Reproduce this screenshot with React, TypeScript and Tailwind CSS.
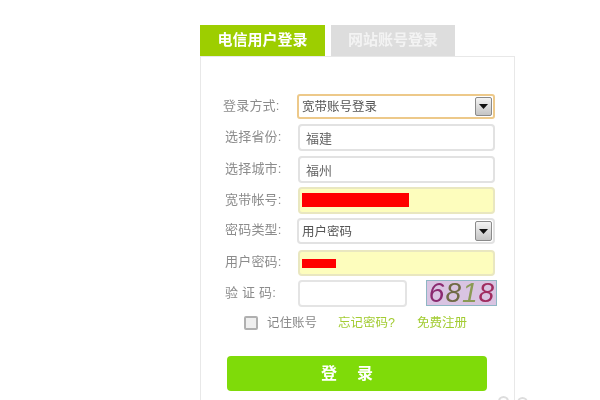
import React from "react";

const font = { fontFamily: '"Liberation Sans", "Noto Sans CJK SC", sans-serif' };

function Arrow() {
  return (
    <div className="absolute right-[1px] top-[1px] bottom-[1px] w-[17px] flex items-center justify-center rounded-[2px] border border-[#8a8a8a] bg-gradient-to-b from-[#f4f4f4] to-[#c4c4c4]">
      <svg width="9" height="5" viewBox="0 0 9 5"><path d="M0 0h9L4.5 5z" fill="#111" /></svg>
    </div>
  );
}

function Row({ label, className, children, indent }: { label: string; className: string; children: React.ReactNode; indent?: boolean }) {
  return (
    <div className={`flex items-center ${className}`}>
      <div className={`w-[74px] shrink-0 -mt-[3px] text-[13px] leading-none text-[#8c8c8c] tracking-[0.2px] whitespace-pre ${indent ? "pl-[2px]" : ""}`}>{label}</div>
      {children}
    </div>
  );
}

function Field({ children, yellow }: { children?: React.ReactNode; yellow?: boolean }) {
  return (
    <div className={`w-[197px] h-full ml-[1px] rounded-[4px] border-2 flex items-center pl-[6px] text-[13px] text-[#666] ${yellow ? "bg-[#fdfdbd] border-[#e9e7c0]" : "bg-white border-[#e2e2e2] pt-[2px]"}`}>
      {children}
    </div>
  );
}

export default function App() {
  return (
    <div className="relative h-[400px] w-[600px] overflow-hidden bg-white pt-[25px] pl-[200px] blur-[0.35px]" style={font}>
      <div className="flex gap-[6px] h-[31px]">
        <div className="w-[125px] bg-[#9dce00] text-white text-[15px] font-bold flex items-center justify-center">电信用户登录</div>
        <div className="w-[124px] bg-[#dddddd] text-[#f3f3f3] text-[15px] font-bold flex items-center justify-center">网站账号登录</div>
      </div>
      <div className="w-[315px] h-[360px] border-t border-r border-l border-[#e8e8e8] pl-[22px] pt-[37px]">
        <Row label="登录方式:" className="h-[25px]">
          <div className="relative w-[198px] h-full rounded-[3px] border-2 border-[#edc98a] bg-white flex items-center pl-[3px] pt-[2px] text-[12.5px] text-[#555]">
            宽带账号登录
            <Arrow />
          </div>
        </Row>
        <Row indent label="选择省份:" className="h-[27px] mt-[5px]"><Field>福建</Field></Row>
        <Row indent label="选择城市:" className="h-[27px] mt-[5px]"><Field>福州</Field></Row>
        <Row indent label="宽带帐号:" className="h-[27px] mt-[4px]">
          <Field yellow><div className="w-[107px] h-[14px] -ml-[4px] -mt-[1px] bg-[#ff0000]" /></Field>
        </Row>
        <Row indent label="密码类型:" className="h-[26px] mt-[4px]">
          <div className="relative w-[198px] h-full rounded-[4px] border-2 border-[#e2e2e2] bg-white flex items-center pl-[3px] pt-[2px] text-[12.5px] text-[#555]">
            用户密码
            <Arrow />
          </div>
        </Row>
        <Row indent label="用户密码:" className="h-[26px] mt-[6px]">
          <Field yellow><div className="w-[34px] h-[9px] -ml-[4px] mt-[1px] bg-[#ff0000]" /></Field>
        </Row>
        <Row indent label="验 证 码:" className="h-[27px] mt-[4px]">
          <div className="w-[109px] h-full ml-[1px] rounded-[4px] border-2 border-[#e4e4e4] bg-white" />
          <div className="ml-[19px] w-[71px] h-[26px] -mt-[2px] border border-[#8fb6c4] bg-[#d9c4e2] flex items-center justify-center gap-[1px] text-[28px] italic leading-none">
            <span className="text-[#8a2a70]">6</span>
            <span className="text-[#6f6a45]">8</span>
            <span className="text-[#8b9a55]">1</span>
            <span className="text-[#a02c60]">8</span>
          </div>
        </Row>
        <div className="flex items-center h-[20px] mt-[6px] ml-[21px] text-[12.5px]">
          <div className="w-[14px] h-[14px] border-2 border-[#b0b0b0] rounded-[2px] bg-[#efefef]" />
          <span className="ml-[9px] text-[#888]">记住账号</span>
          <span className="ml-[21px] text-[#a3cc33]">忘记密码?</span>
          <span className="ml-[22px] text-[#a3cc33]">免费注册</span>
        </div>
        <div className="w-[260px] h-[35px] mt-[23px] ml-[4px] pr-[20px] rounded-[4px] bg-[#7fdb09] text-white text-[16px] font-bold flex items-center justify-center gap-[20px]">
          <span>登</span>
          <span>录</span>
        </div>
      </div>
      <div className="absolute left-[498px] top-[396px] w-[11px] h-[11px] rounded-full border-2 border-[#ddd]" />
      <div className="absolute left-[517px] top-[397px] w-[11px] h-[11px] rounded-full border-2 border-[#ddd]" />
    </div>
  );
}
